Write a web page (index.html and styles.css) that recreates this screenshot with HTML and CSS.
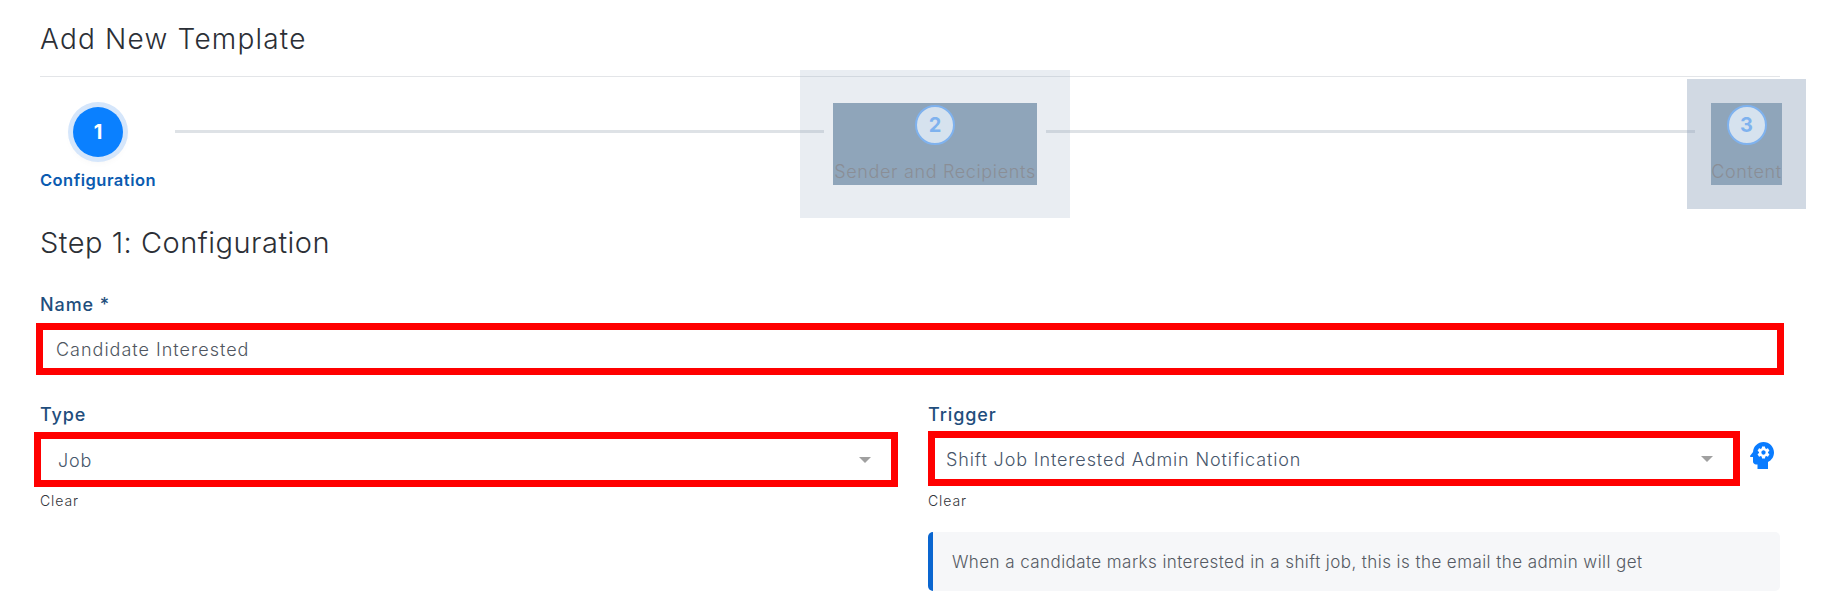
FILE: index.html
```html
<!DOCTYPE html>
<html lang="en">
<head>
    <meta charset="UTF-8">
    <meta name="viewport" content="width=device-width, initial-scale=1.0">
    <title>Add New Template</title>
    <link rel="stylesheet" href="styles.css">
</head>
<body>
    <div class="page">
        <h1 class="page-title">Add New Template</h1>

        <div class="stepper">
            <div class="step step-active">
                <div class="step-circle">1</div>
                <div class="step-label">Configuration</div>
            </div>
            <div class="step-line step-line-first"></div>
            <div class="step step-second">
                <div class="step-circle">2</div>
                <div class="step-label">Sender and Recipients</div>
            </div>
            <div class="step-line step-line-second"></div>
            <div class="step step-third">
                <div class="step-circle">3</div>
                <div class="step-label">Content</div>
            </div>
        </div>

        <h2 class="form-title">Step 1: Configuration</h2>

        <label class="field-label" for="templateName">Name *</label>
        <input class="name-input" id="templateName" type="text" value="Candidate Interested">

        <div class="form-row">
            <div class="form-col">
                <div class="field-label">Type</div>
                <div class="select-box select-type">
                    <span>Job</span>
                    <span class="select-arrow"></span>
                </div>
                <div class="clear-link">Clear</div>
            </div>
            <div class="form-col">
                <div class="field-label">Trigger</div>
                <div class="trigger-row">
                    <div class="select-box select-trigger">
                        <span>Shift Job Interested Admin Notification</span>
                        <span class="select-arrow"></span>
                    </div>
                    <svg class="trigger-icon" viewBox="4 3 16 18" aria-hidden="true">
                        <path d="M13 8.57c-.79 0-1.43.64-1.43 1.43s.64 1.43 1.43 1.43 1.43-.64 1.43-1.43-.64-1.43-1.43-1.43z"/>
                        <path d="M13 3C9.25 3 6.2 5.94 6.02 9.64L4.1 12.2c-.25.33-.01.8.4.8H6v3c0 1.1.9 2 2 2h1v3h7v-4.68c2.36-1.12 4-3.53 4-6.32 0-3.87-3.13-7-7-7zm3 7c0 .13-.01.26-.02.39l.83.66c.08.06.1.16.05.25l-.8 1.39c-.05.09-.16.12-.24.09l-.99-.4c-.21.16-.43.29-.67.39L14 13.83c-.01.1-.1.17-.2.17h-1.6c-.1 0-.18-.07-.2-.17l-.15-1.06c-.25-.1-.47-.23-.68-.39l-.99.4c-.09.03-.2 0-.25-.09l-.8-1.39c-.05-.08-.03-.19.05-.25l.84-.66c-.01-.13-.02-.26-.02-.39s.02-.27.04-.39l-.85-.66c-.08-.06-.1-.16-.05-.26l.8-1.38c.05-.09.15-.12.24-.09l1 .4c.2-.15.43-.29.67-.39L12 6.17c.02-.1.1-.17.2-.17h1.6c.1 0 .18.07.2.17l.15 1.06c.24.1.46.23.67.39l1-.4c.09-.03.2 0 .24.09l.8 1.38c.05.09.03.2-.05.26l-.85.66c.03.12.04.25.04.39z"/>
                    </svg>
                </div>
                <div class="clear-link clear-trigger">Clear</div>
                <div class="info-box">When a candidate marks interested in a shift job, this is the email the admin will get</div>
            </div>
        </div>
    </div>
</body>
</html>
```

FILE: styles.css
```css
* {
    margin: 0;
    padding: 0;
    box-sizing: border-box;
}

html, body {
    height: 609px;
    overflow: hidden;
}

body {
    font-family: 'Inter', 'Noto Sans', sans-serif;
    background: #fff;
    color: #2b2f36;
}

.page {
    padding: 0 64px 0 40px;
}

.page-title {
    height: 77px;
    padding-top: 20px;
    font-size: 28px;
    line-height: 38px;
    font-weight: 300;
    letter-spacing: 1.2px;
    border-bottom: 1px solid #e3e5e8;
}

.stepper {
    display: flex;
    align-items: flex-start;
    height: 129px;
}

.step {
    position: relative;
    display: flex;
    flex-direction: column;
    align-items: center;
    text-align: center;
}

.step-circle {
    width: 40px;
    height: 40px;
    border-radius: 50%;
    display: flex;
    align-items: center;
    justify-content: center;
    font-size: 20px;
    font-weight: 700;
    color: #7fb2ee;
    background: #d6e2ee;
    border: 2px solid #7fb2ee;
}

.step-label {
    font-size: 18px;
    line-height: 24px;
    font-weight: 300;
    letter-spacing: 0.65px;
    color: #8a8e96;
    white-space: nowrap;
}

.step-active {
    margin-top: 30px;
    width: 116px;
}

.step-active .step-circle {
    width: 50px;
    height: 50px;
    color: #fff;
    background: #0a80ff;
    border: none;
    box-shadow: 0 0 0 5px #d5e6fb, 0 4px 10px rgba(0, 0, 0, 0.06);
}

.step-active .step-label {
    margin-top: 11px;
    font-size: 16.5px;
    font-weight: 600;
    letter-spacing: 0.5px;
    color: #0a5bb0;
}

.step-second,
.step-third {
    margin-top: 26px;
    height: 82px;
    padding-top: 2px;
    background: #8fa5ba;
}

.step-second .step-label,
.step-third .step-label {
    margin-top: 15px;
}

.step-second {
    width: 204px;
}

.step-third {
    width: 71px;
    margin-right: -2px;
}

/* margin highlights, they tint the rule and the lines under them */
.step-second::before,
.step-third::before {
    content: '';
    position: absolute;
    pointer-events: none;
    z-index: 1;
}

.step-second::before {
    inset: -33px;
    background: rgba(140, 160, 185, 0.19);
    clip-path: polygon(0 0, 100% 0, 100% 100%, 0 100%, 0 33px, 33px 33px, 33px 115px, 237px 115px, 237px 33px, 0 33px);
}

.step-third::before {
    inset: -24px;
    background: rgba(140, 160, 185, 0.4);
    clip-path: polygon(0 0, 100% 0, 100% 100%, 0 100%, 0 24px, 24px 24px, 24px 106px, 95px 106px, 95px 24px, 0 24px);
}

.step-line {
    flex: 1;
    height: 3px;
    margin-top: 53px;
    background: #dee2e6;
}

.step-line-first {
    margin-left: 19px;
    margin-right: 9px;
}

.step-line-second {
    margin-left: 9px;
    margin-right: 16px;
}

.form-title {
    font-size: 29px;
    line-height: 36px;
    font-weight: 300;
    letter-spacing: 0.5px;
    color: #2b2f36;
    margin-top: 19px;
}

.field-label {
    display: block;
    font-size: 18px;
    line-height: 24px;
    font-weight: 500;
    letter-spacing: 0.9px;
    color: #1f4e7d;
}

.form-title + .field-label {
    margin-top: 32px;
}

.name-input {
    display: block;
    width: 1748px;
    height: 52px;
    margin: 6px 0 0 -4px;
    padding: 0 13px;
    border: 7px solid #f00;
    outline: none;
    background: #fff;
    font-family: inherit;
    font-size: 18px;
    font-weight: 300;
    letter-spacing: 1px;
    color: #4f5660;
}

.form-row {
    display: grid;
    grid-template-columns: 852px 852px;
    column-gap: 36px;
    margin-top: 28px;
}

.select-box {
    display: flex;
    align-items: center;
    justify-content: space-between;
    height: 55px;
    padding: 1px 20px 0 17px;
    border: 7px solid #f00;
    background: #fff;
    font-size: 18px;
    font-weight: 300;
    letter-spacing: 0.87px;
    color: #47566b;
}

.select-type {
    margin: 5px -6px 0 -6px;
}

.trigger-row {
    display: flex;
    align-items: flex-start;
    margin-top: 4px;
}

.select-trigger {
    width: 812px;
    padding-left: 11px;
}

.select-arrow {
    width: 0;
    height: 0;
    border-left: 6px solid transparent;
    border-right: 6px solid transparent;
    border-top: 6px solid #a0a0a0;
}

.trigger-icon {
    flex: none;
    width: 24px;
    height: 27px;
    margin: 11px 0 0 10px;
    fill: #0a7cff;
}

.clear-link {
    margin-top: 5px;
    font-size: 14px;
    line-height: 18px;
    font-weight: 300;
    letter-spacing: 0.9px;
    color: #33363b;
}

.clear-trigger {
    margin-top: 6px;
}

.info-box {
    margin-top: 22px;
    height: 59px;
    display: flex;
    align-items: center;
    padding-left: 19px;
    border-left: 5px solid #0a66d0;
    border-radius: 5px;
    background: #f6f7f9;
    font-size: 17px;
    font-weight: 300;
    letter-spacing: 0.43px;
    color: #555a63;
}
```
